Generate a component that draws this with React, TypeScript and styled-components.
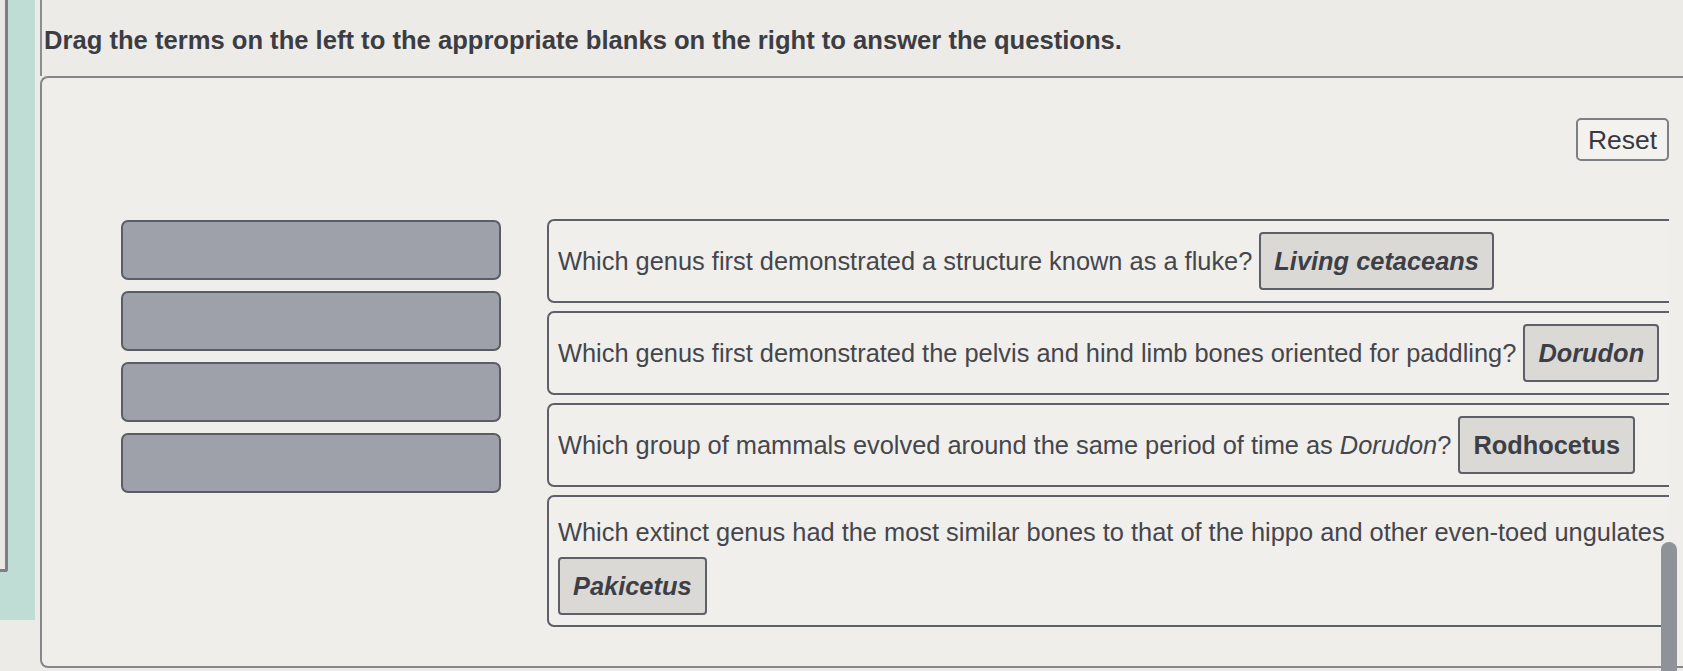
import React from "react";
import styled, { createGlobalStyle } from "styled-components";

const GlobalStyle = createGlobalStyle`
  html, body {
    margin: 0;
    padding: 0;
    background: #ecebe7;
    font-family: "Liberation Sans", Arial, sans-serif;
    color: #3f4046;
  }
  * { box-sizing: border-box; }
`;

const Page = styled.div`
  position: relative;
  display: flex;
  width: 1683px;
  height: 671px;
  overflow: hidden;
  background: #ecebe7;
`;

const Rail = styled.div`
  flex: 0 0 40px;
  display: flex;
  flex-direction: column;
  padding-right: 5px;
`;

const TealFrame = styled.div`
  height: 620px;
  background: #bfddd5;
  padding-right: 24px;
`;

const InnerCard = styled.div`
  width: 8px;
  height: 572px;
  background: #e9e8e4;
  border-right: 3px solid #7d7f85;
  border-bottom: 3px solid #7d7f85;
  border-bottom-right-radius: 3px;
`;

const Main = styled.div`
  flex: 1;
  display: flex;
  flex-direction: column;
`;

const Header = styled.div`
  border-left: 2px solid #8b8d93;
  padding: 25px 0 0 2px;
  height: 76px;
`;

const Title = styled.h1`
  margin: 0;
  font-size: 25.6px;
  line-height: 30px;
  font-weight: 700;
  color: #3c3d43;
  white-space: nowrap;
`;

const Panel = styled.div`
  flex: 0 0 592px;
  display: flex;
  flex-direction: column;
  border-top: 2px solid #85878d;
  border-left: 2px solid #85878d;
  border-bottom: 2px solid #85878d;
  border-radius: 8px 0 0 8px;
  background: #efeeea;
  padding: 40px 14px 0 0;
`;

const ResetRow = styled.div`
  display: flex;
  justify-content: flex-end;
`;

const ResetButton = styled.button`
  font-family: "Liberation Sans", Arial, sans-serif;
  font-size: 26.5px;
  line-height: 30px;
  color: #38393f;
  background: #f3f2ef;
  border: 2px solid #7d7f86;
  border-radius: 5px;
  padding: 5px 8px;
  height: 43px;
  width: 93px;
`;

const Board = styled.div`
  display: flex;
  margin-top: 58px;
  padding-left: 79px;
`;

const TermColumn = styled.div`
  flex: 0 0 380px;
  display: flex;
  flex-direction: column;
  gap: 11px;
  padding-top: 1px;
`;

const TermSlot = styled.div`
  height: 60px;
  background: #9ea1aa;
  border: 2px solid #5a5d66;
  border-radius: 7px;
`;

const QuestionColumn = styled.div`
  flex: 1;
  margin-left: 46px;
  display: flex;
  flex-direction: column;
  gap: 8px;
`;

const QuestionBox = styled.div<{ $tall?: boolean }>`
  display: flex;
  flex-wrap: wrap;
  align-items: center;
  align-content: ${(p) => (p.$tall ? "flex-start" : "center")};
  column-gap: 7px;
  row-gap: 10px;
  min-height: 84px;
  padding: ${(p) => (p.$tall ? "20px 0 10px 9px" : "11px 0 11px 9px")};
  border-top: 2px solid #5d6068;
  border-left: 2px solid #5d6068;
  border-bottom: 2px solid #5d6068;
  border-radius: 7px 0 0 7px;
  background: #f0efeb;
`;

const QuestionText = styled.span`
  font-size: 25.4px;
  line-height: 30px;
  color: #45464c;
  white-space: nowrap;
`;

const Chip = styled.span<{ $italic?: boolean }>`
  display: inline-block;
  font-size: 25.4px;
  line-height: 30px;
  font-weight: 700;
  font-style: ${(p) => (p.$italic ? "italic" : "normal")};
  color: #3e3f46;
  background: #dad9d6;
  border: 2px solid #5d6069;
  border-radius: 4px;
  padding: 12px 13px;
  white-space: nowrap;
`;

const ScrollThumb = styled.div`
  position: absolute;
  right: 6px;
  top: 542px;
  width: 16px;
  height: 140px;
  border-radius: 8px;
  background: #8f9298;
`;

const questions = [
  {
    text: <>Which genus first demonstrated a structure known as a fluke?</>,
    answer: "Living cetaceans",
    italic: true,
  },
  {
    text: <>Which genus first demonstrated the pelvis and hind limb bones oriented for paddling?</>,
    answer: "Dorudon",
    italic: true,
  },
  {
    text: (
      <>
        Which group of mammals evolved around the same period of time as <i>Dorudon</i>?
      </>
    ),
    answer: "Rodhocetus",
    italic: false,
  },
  {
    text: <>Which extinct genus had the most similar bones to that of the hippo and other even-toed ungulates</>,
    answer: "Pakicetus",
    italic: true,
    tall: true,
  },
];

export default function App() {
  return (
    <>
      <GlobalStyle />
      <Page>
        <Rail>
          <TealFrame>
            <InnerCard />
          </TealFrame>
        </Rail>
        <Main>
          <Header>
            <Title>Drag the terms on the left to the appropriate blanks on the right to answer the questions.</Title>
          </Header>
          <Panel>
            <ResetRow>
              <ResetButton>Reset</ResetButton>
            </ResetRow>
            <Board>
              <TermColumn>
                <TermSlot />
                <TermSlot />
                <TermSlot />
                <TermSlot />
              </TermColumn>
              <QuestionColumn>
                {questions.map((q, i) => (
                  <QuestionBox key={i} $tall={q.tall}>
                    <QuestionText>{q.text}</QuestionText>
                    <Chip $italic={q.italic}>{q.answer}</Chip>
                  </QuestionBox>
                ))}
              </QuestionColumn>
            </Board>
          </Panel>
        </Main>
        <ScrollThumb />
      </Page>
    </>
  );
}
